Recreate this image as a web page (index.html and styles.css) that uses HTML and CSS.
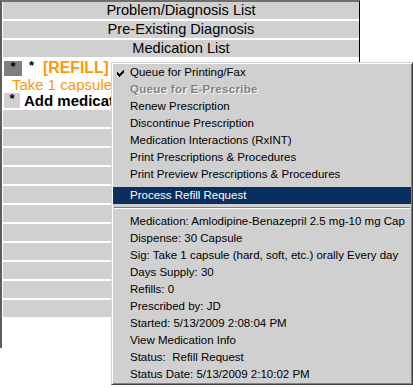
FILE: index.html
```html
<!DOCTYPE html>
<html>
<head>
<meta charset="utf-8">
<link rel="stylesheet" href="styles.css">
</head>
<body>
<div class="panel">
  <div class="hdr">Problem/Diagnosis List</div>
  <div class="hdr">Pre-Existing Diagnosis</div>
  <div class="hdr">Medication List</div>
  <div class="entries">
    <div class="line l1"><span class="box dark">*</span><span class="star">*</span><span class="refill">[REFILL]</span></div>
    <div class="line l2">Take 1 capsule (hard, soft, etc.) orally Every day</div>
    <div class="line l3"><span class="box light">*</span><span class="add">Add medication</span></div>
  </div>
  <div class="rows">
    <div class="row"></div><div class="row"></div><div class="row"></div><div class="row"></div>
    <div class="row"></div><div class="row"></div><div class="row"></div><div class="row"></div>
    <div class="row"></div><div class="row"></div><div class="row"></div>
  </div>
</div>

<div class="menu">
  <div class="item"><svg class="check" width="7" height="7" viewBox="0 0 7 7"><path d="M0 2h1v1h1v1h1v-1h1v-1h1v-1h1v-1h1v3h-1v1h-1v1h-1v1h-1v1h-1v-1h-1v-1h-1z" fill="#000"/></svg>Queue for Printing/Fax</div>
  <div class="item disabled">Queue for E-Prescribe</div>
  <div class="item">Renew Prescription</div>
  <div class="item">Discontinue Prescription</div>
  <div class="item">Medication Interactions (RxINT)</div>
  <div class="item">Print Prescriptions &amp; Procedures</div>
  <div class="item">Print Preview Prescriptions &amp; Procedures</div>
  <div class="item active">Process Refill Request</div>
  <div class="sep"></div>
  <div class="item">Medication: Amlodipine-Benazepril 2.5 mg-10 mg Cap</div>
  <div class="item">Dispense: 30 Capsule</div>
  <div class="item">Sig: Take 1 capsule (hard, soft, etc.) orally Every day</div>
  <div class="item">Days Supply: 30</div>
  <div class="item">Refills: 0</div>
  <div class="item">Prescribed by: JD</div>
  <div class="item">Started: 5/13/2009 2:08:04 PM</div>
  <div class="item">View Medication Info</div>
  <div class="item">Status:  Refill Request</div>
  <div class="item">Status Date: 5/13/2009 2:10:02 PM</div>
</div>
</body>
</html>
```
FILE: styles.css
```css
html, body {
  margin: 0;
  padding: 0;
  background: #fff;
  width: 413px;
  height: 388px;
  overflow: hidden;
}

.panel {
  width: 356px;
  height: 346px;
  border-left: 2px solid #5e5e5e;
  border-top: 2px solid #6e6e6e;
  border-right: 1px solid #000;
  padding-left: 1px;
  display: flex;
  flex-direction: column;
  gap: 2px;
  overflow: hidden;
  font-family: "Liberation Sans", Arial, sans-serif;
}

.hdr {
  height: 17px;
  flex: none;
  background: #d0d0d0;
  color: #000;
  font-size: 14.6px;
  line-height: 17px;
  text-align: center;
}

.entries {
  width: 108px;
  height: 49px;
  flex: none;
  display: flex;
  flex-direction: column;
  white-space: nowrap;
  overflow: hidden;
}

.line {
  display: flex;
  align-items: center;
  font-size: 15px;
  overflow: hidden;
}

.l1 { height: 17px; }
.l2 { height: 16px; padding-left: 9px; color: #ff9900; }
.l3 { height: 16px; }

.box {
  flex: none;
  display: flex;
  justify-content: center;
  align-items: flex-start;
  font-weight: bold;
  font-size: 13px;
  line-height: 12px;
  color: #000;
  margin-left: 1px;
}

.box.dark {
  width: 18px;
  height: 15px;
  background: #808080;
  align-self: flex-end;
}

.box.light {
  width: 16px;
  height: 15px;
  background: #d0d0d0;
  align-self: flex-end;
}

.star {
  flex: none;
  font-weight: bold;
  font-size: 13px;
  margin-left: 7px;
  align-self: flex-start;
  line-height: 12px;
  margin-top: 1px;
}

.refill {
  flex: none;
  font-weight: bold;
  color: #ff9900;
  margin-left: 9px;
  font-size: 15.8px;
}

.add {
  font-weight: bold;
  color: #000;
  margin-left: 4px;
}

.rows {
  display: flex;
  flex-direction: column;
  gap: 2px;
}

.row {
  height: 17px;
  background: #d0d0d0;
}

.menu {
  position: absolute;
  left: 111px;
  top: 62px;
  width: 298px;
  padding: 1px;
  background: #d0d0d0;
  border: 1px solid;
  border-color: #d4d4d4 #404040 #404040 #d4d4d4;
  box-shadow: inset 1px 1px 0 #fff, inset -1px -1px 0 #808080;
  font-family: "Liberation Sans", Arial, sans-serif;
  font-size: 11.5px;
  color: #000;
  display: flex;
  flex-direction: column;
}

.item {
  height: 17px;
  line-height: 17px;
  padding-left: 17px;
  white-space: pre;
  position: relative;
}

.check {
  position: absolute;
  left: 4px;
  top: 6px;
}

.disabled {
  color: #808080;
  font-weight: bold;
  letter-spacing: 0.3px;
  text-shadow: 1px 1px 0 #fff;
}

.active {
  margin-top: 4px;
  background: #0a2f5e;
  color: #fff;
}

.sep {
  height: 9px;
  box-sizing: border-box;
  padding-top: 3px;
  margin: 0 1px;
}

.sep::before {
  content: "";
  display: block;
  height: 1px;
  background: #808080;
  border-bottom: 1px solid #fff;
}
```
